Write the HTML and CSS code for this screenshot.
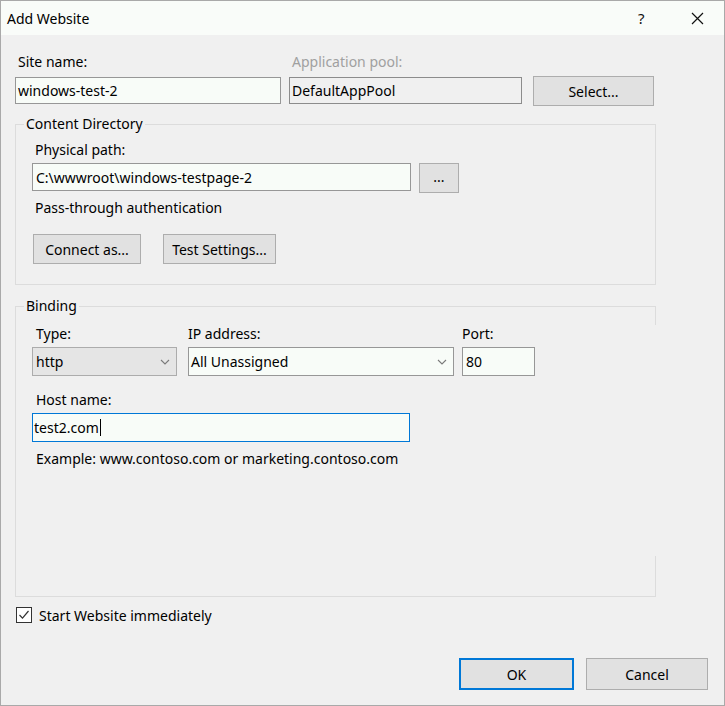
FILE: index.html
```html
<!DOCTYPE html>
<html>
<head>
<meta charset="utf-8">
<title>Add Website</title>
<link rel="stylesheet" href="styles.css">
</head>
<body>
<div class="window">
  <div class="titlebar">
    <span class="title">Add Website</span>
    <span class="help">?</span>
    <span class="close"><svg width="13" height="13" viewBox="0 0 13 13"><path d="M1 1 L12 12 M12 1 L1 12" stroke="#111" stroke-width="1.2" fill="none"/></svg></span>
  </div>
  <div class="content">
    <div class="row-top">
      <div class="field site">
        <div class="label">Site name:</div>
        <div class="textbox">windows-test-2</div>
      </div>
      <div class="field pool">
        <div class="label disabled">Application pool:</div>
        <div class="textbox readonly">DefaultAppPool</div>
      </div>
      <div class="button select">Select...</div>
    </div>

    <fieldset class="group content-dir">
      <legend>Content Directory</legend>
      <div class="label">Physical path:</div>
      <div class="path-row">
        <div class="textbox path">C:\wwwroot\windows-testpage-2</div>
        <div class="button browse">...</div>
      </div>
      <div class="label auth">Pass-through authentication</div>
      <div class="btn-row">
        <div class="button connect">Connect as...</div>
        <div class="button test">Test Settings...</div>
      </div>
    </fieldset>

    <fieldset class="group binding">
      <legend>Binding</legend>
      <div class="bind-row">
        <div class="field type">
          <div class="label">Type:</div>
          <div class="combo dropdown"><span>http</span><svg class="chev" width="10" height="6" viewBox="0 0 10 6"><path d="M1 1 L5 5 L9 1" stroke="#7a7a7a" stroke-width="1.1" fill="none"/></svg></div>
        </div>
        <div class="field ip">
          <div class="label flush">IP address:</div>
          <div class="combo editable"><span>All Unassigned</span><svg class="chev" width="10" height="6" viewBox="0 0 10 6"><path d="M1 1 L5 5 L9 1" stroke="#7a7a7a" stroke-width="1.1" fill="none"/></svg></div>
        </div>
        <div class="field port">
          <div class="label flush">Port:</div>
          <div class="textbox small">80</div>
        </div>
      </div>
      <div class="label host-label">Host name:</div>
      <div class="textbox host focused">test2.com<span class="caret"></span></div>
      <div class="label example">Example: www.contoso.com or marketing.contoso.com</div>
    </fieldset>

    <div class="check-row">
      <span class="checkbox"><svg width="14" height="14" viewBox="0 0 14 14"><path d="M2.5 7 L5.5 10.2 L11.5 3" stroke="#333" stroke-width="1.2" fill="none"/></svg></span>
      <span class="check-label">Start Website immediately</span>
    </div>

    <div class="footer">
      <div class="button ok">OK</div>
      <div class="button cancel">Cancel</div>
    </div>
  </div>
</div>
</body>
</html>
```
FILE: styles.css
```css
html, body {
  margin: 0;
  padding: 0;
  background: #f0f0f0;
}

.window {
  width: 725px;
  height: 706px;
  box-sizing: border-box;
  border: 1px solid #a9a9a9;
  background: #f0f0f0;
  font-family: "Noto Sans", "Open Sans", sans-serif;
  font-size: 14px;
  color: #000;
  display: flex;
  flex-direction: column;
}

.titlebar {
  height: 34px;
  flex: none;
  background: #f9fcf9;
  display: flex;
  align-items: center;
  padding-left: 6px;
}

.title {
  flex: 1;
}

.help {
  font-size: 15px;
  width: 9px;
  margin-right: 44px;
  color: #111;
}

.close {
  width: 13px;
  height: 13px;
  margin-right: 20px;
  display: flex;
}

.content {
  flex: 1;
  padding: 17px 14px 0 14px;
  display: flex;
  flex-direction: column;
}

.label {
  line-height: 20px;
  padding-left: 3px;
  white-space: nowrap;
}

.label.flush {
  padding-left: 0;
}

.label.disabled {
  color: #a0a0a0;
}

.row-top {
  display: flex;
  align-items: flex-end;
}

.row-top .label {
  margin-bottom: 5px;
}

.field.site {
  width: 266px;
}

.field.pool {
  width: 233px;
  margin-left: 8px;
}

.textbox {
  box-sizing: border-box;
  height: 27px;
  border: 1px solid #979797;
  background: #f8fcf8;
  display: flex;
  align-items: center;
  padding-left: 2px;
  white-space: nowrap;
}

.textbox.readonly {
  background: #f0f0f0;
  border-color: #8c8c8c;
}

.button {
  box-sizing: border-box;
  height: 30px;
  border: 1px solid #adadad;
  background: #e1e1e1;
  display: flex;
  align-items: center;
  justify-content: center;
  white-space: nowrap;
}

.button.select {
  width: 121px;
  margin-left: 11px;
  margin-bottom: -2px;
}

.group {
  margin: 10px 0 0 0;
  width: 641px;
  box-sizing: border-box;
  border: 1px solid #dcdcdc;
  min-width: 0;
}

.group legend {
  padding: 0 2px;
  margin-left: -8px;
  line-height: 20px;
}

.content-dir {
  padding: 6px 0 20px 16px;
}

.path-row {
  display: flex;
  align-items: flex-start;
  margin-top: 3px;
}

.textbox.path {
  width: 379px;
  height: 28px;
  padding-left: 3px;
}

.button.browse {
  width: 40px;
  margin-left: 8px;
  padding-bottom: 4px;
}

.label.auth {
  margin-top: 5px;
}

.btn-row {
  display: flex;
  margin-top: 16px;
}

.button.connect {
  width: 108px;
  margin-left: 1px;
}

.button.test {
  width: 113px;
  margin-left: 22px;
}

.binding {
  margin-top: 11px;
  padding: 8px 0 0 16px;
  height: 301px;
  border-right-color: transparent;
}

.bind-row {
  display: flex;
  position: relative;
}

/* short right-edge fragments of the Binding frame, as drawn in the original */
.bind-row::before {
  content: "";
  position: absolute;
  right: -1px;
  top: -18px;
  width: 1px;
  height: 19px;
  background: #dcdcdc;
}

.bind-row .label {
  margin-bottom: 3px;
}

.bind-row .label:not(.flush) {
  padding-left: 4px;
}

.field.type {
  width: 145px;
}

.field.ip {
  width: 266px;
  margin-left: 11px;
}

.field.port {
  width: 73px;
  margin-left: 8px;
}

.combo {
  box-sizing: border-box;
  height: 29px;
  border: 1px solid #979797;
  display: flex;
  align-items: center;
  justify-content: space-between;
  padding: 0 6px 0 3px;
}

.combo.dropdown {
  background: #e5e5e5;
  border-color: #acacac;
}

.combo.editable {
  background: #f8fcf8;
  padding-left: 2px;
}

.chev {
  display: block;
}

.textbox.small {
  height: 29px;
  padding-left: 3px;
}

.label.host-label {
  margin-top: 14px;
  padding-left: 4px;
}

.textbox.host {
  width: 378px;
  height: 29px;
  margin-top: 3px;
  padding-left: 1px;
}

.textbox.focused {
  border-color: #0078d7;
}

.caret {
  display: inline-block;
  width: 1px;
  height: 17px;
  background: #000;
  margin-left: 1px;
}

.label.example {
  margin-top: 7px;
  padding-left: 4px;
  position: relative;
}

.label.example::after {
  content: "";
  position: absolute;
  left: 623px;
  top: 107px;
  width: 1px;
  height: 41px;
  background: #dcdcdc;
}

.check-row {
  display: flex;
  align-items: center;
  height: 20px;
  margin-top: 8px;
}

.checkbox {
  box-sizing: border-box;
  width: 16px;
  height: 16px;
  border: 1px solid #333;
  background: #fff;
  display: flex;
  align-items: center;
  justify-content: center;
  margin-left: 1px;
}

.check-label {
  margin-left: 7px;
}

.footer {
  display: flex;
  justify-content: flex-end;
  margin-top: 33px;
  padding-right: 2px;
}

.button.ok {
  width: 115px;
  height: 32px;
  border: 2px solid #0078d7;
}

.button.cancel {
  width: 122px;
  height: 32px;
  margin-left: 12px;
}
```
